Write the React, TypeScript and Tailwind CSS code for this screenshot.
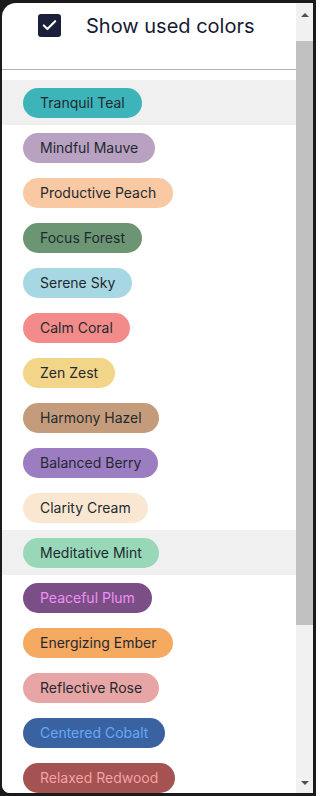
import { Check } from "lucide-react";

const colors = [
  { name: "Tranquil Teal", bg: "bg-[#3db4b9]", text: "text-[#1f2a30]", active: true },
  { name: "Mindful Mauve", bg: "bg-[#b9a1c1]", text: "text-[#1f2a30]" },
  { name: "Productive Peach", bg: "bg-[#f9c9a3]", text: "text-[#1f2a30]" },
  { name: "Focus Forest", bg: "bg-[#6b9573]", text: "text-[#1f2a30]" },
  { name: "Serene Sky", bg: "bg-[#a8d7e4]", text: "text-[#1f2a30]" },
  { name: "Calm Coral", bg: "bg-[#f28b89]", text: "text-[#1f2a30]" },
  { name: "Zen Zest", bg: "bg-[#f3d58a]", text: "text-[#1f2a30]" },
  { name: "Harmony Hazel", bg: "bg-[#c59c7b]", text: "text-[#1f2a30]" },
  { name: "Balanced Berry", bg: "bg-[#9d7dc1]", text: "text-[#1f2a30]" },
  { name: "Clarity Cream", bg: "bg-[#f9e7d2]", text: "text-[#1f2a30]" },
  { name: "Meditative Mint", bg: "bg-[#98d8b9]", text: "text-[#1f2a30]", active: true },
  { name: "Peaceful Plum", bg: "bg-[#7b4f85]", text: "text-[#ec8ff5]" },
  { name: "Energizing Ember", bg: "bg-[#f5a961]", text: "text-[#1f2a30]" },
  { name: "Reflective Rose", bg: "bg-[#e8a5a5]", text: "text-[#1f2a30]" },
  { name: "Centered Cobalt", bg: "bg-[#3a62a1]", text: "text-[#62aaf8]" },
  { name: "Relaxed Redwood", bg: "bg-[#a45252]", text: "text-[#f2a3a3]" },
];

function Scrollbar() {
  return (
    <div className="flex w-[17px] shrink-0 flex-col bg-[#f1f1f1]">
      <div className="flex h-[17px] items-center justify-center pt-[6px]">
        <div className="h-0 w-0 border-x-[4px] border-b-[4px] border-x-transparent border-b-[#505050]" />
      </div>
      <div className="mt-[21px] h-[584px] bg-[#c1c1c1]" />
      <div className="flex-1" />
      <div className="flex h-[17px] items-center justify-center pb-[4px]">
        <div className="h-0 w-0 border-x-[4px] border-t-[4px] border-x-transparent border-t-[#505050]" />
      </div>
    </div>
  );
}

export default function App() {
  return (
    <div className="h-[796px] w-[316px] bg-[#1b1b1b] pb-[3px] pl-[2px] pr-[3px] pt-[3px] font-['Inter',sans-serif]">
      <div className="flex h-full overflow-hidden rounded-bl-[8px] rounded-tl-[14px] bg-white">
        <div className="flex min-w-0 flex-1 flex-col overflow-hidden">
          <div className="flex h-[67px] shrink-0 items-start border-b border-[#b4b4b4] pl-[36px] pt-[11px]">
            <div className="flex h-[23px] w-[23px] items-center justify-center rounded-[3px] bg-[#1b1f3b]">
              <Check className="h-[17px] w-[17px] text-white" strokeWidth={3} />
            </div>
            <span className="ml-[25px] text-[20px] leading-[24px] text-[#161a33]">Show used colors</span>
          </div>
          <div className="mt-[10px] flex flex-col">
            {colors.map((c) => (
              <div
                key={c.name}
                className={`flex h-[45px] shrink-0 items-center pl-[21px] ${c.active ? "bg-[#f0f0f0]" : "bg-white"}`}
              >
                <span
                  className={`flex h-[30px] items-center rounded-full px-[17px] text-[14px] ${c.bg} ${c.text}`}
                >
                  {c.name}
                </span>
              </div>
            ))}
          </div>
        </div>
        <Scrollbar />
      </div>
    </div>
  );
}
